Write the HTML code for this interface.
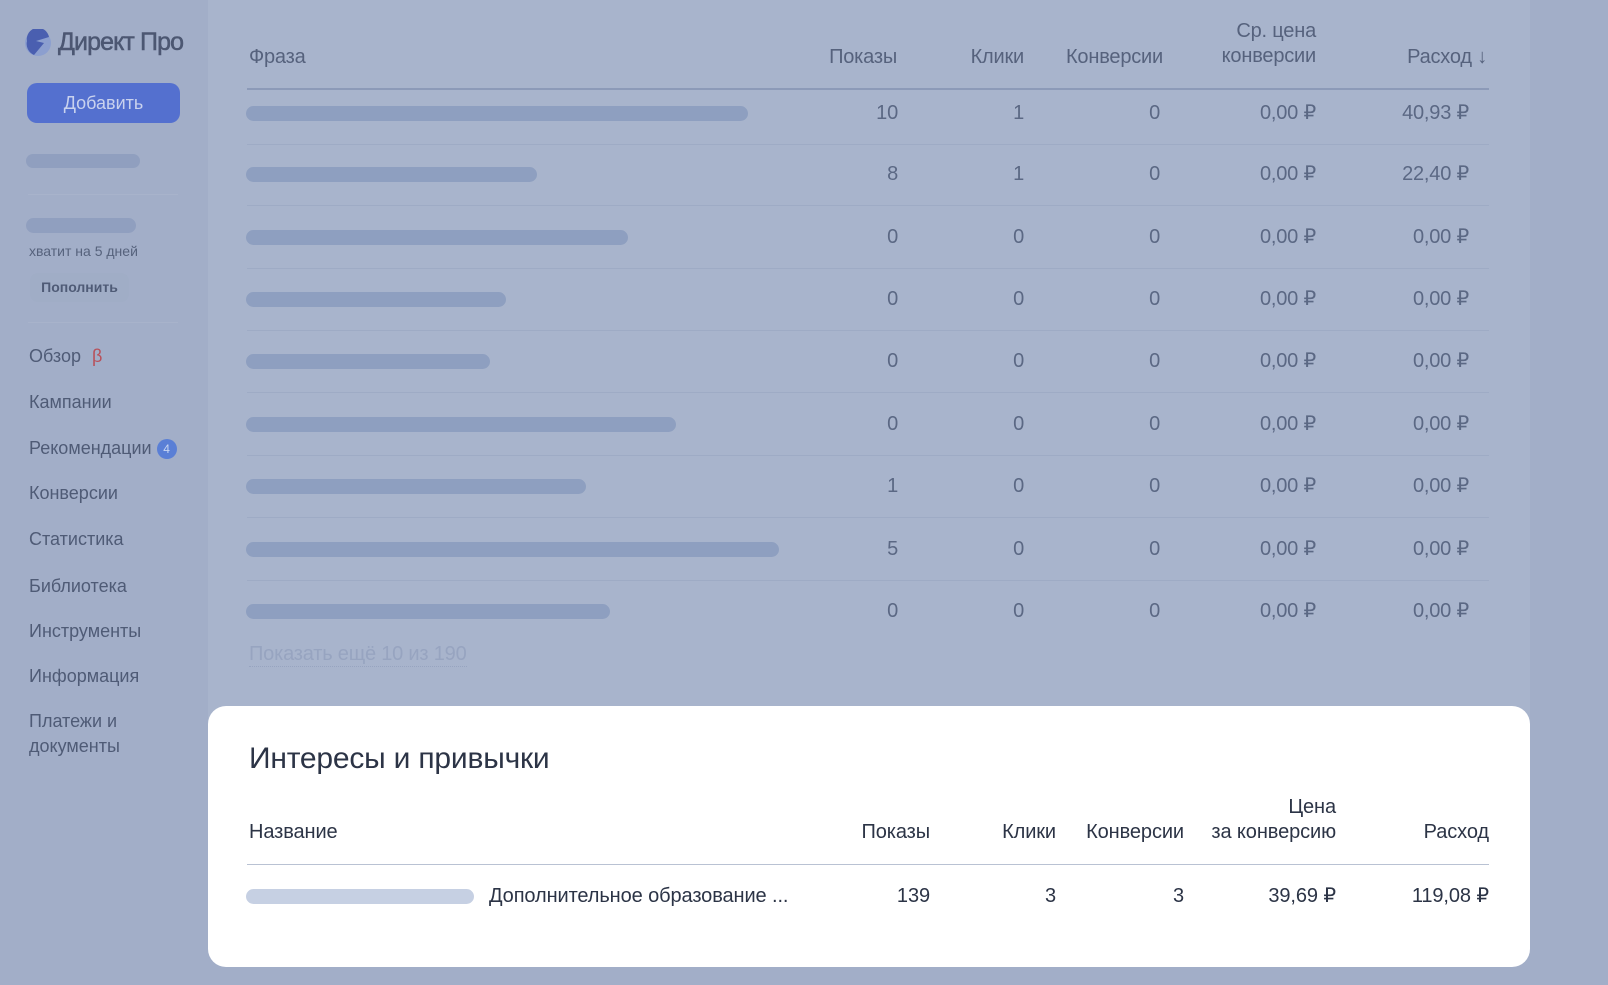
<!DOCTYPE html>
<html><head><meta charset="utf-8"><style>
*{margin:0;padding:0;box-sizing:border-box}
body{width:1608px;height:985px;background:#a2aec8;font-family:"Liberation Sans","Noto Sans CJK SC",sans-serif;position:relative;overflow:hidden}
.a{position:absolute;white-space:nowrap;line-height:24px}
.panel{position:absolute;left:208px;top:0;width:1322px;height:720px;background:#a8b4cc}
.h{color:#56627d;font-size:20px;letter-spacing:-0.2px}
.n{color:#5b6884;font-size:20px;letter-spacing:-0.2px;text-align:right}
.bar{position:absolute;left:246px;height:15px;border-radius:8px;background:#8e9fc0}
.sep{position:absolute;left:247px;width:1242px;height:1px;background:#9eabc5}
.nav{position:absolute;left:29px;color:#4f5b76;font-size:18px}
.card{position:absolute;left:208px;top:706px;width:1322px;height:261px;background:#fff;border-radius:18px}
.c{color:#2c3446;font-size:20px;letter-spacing:-0.1px}
</style></head><body>
<div class="panel"></div>
<svg class="a" style="left:24px;top:29px" width="28" height="28" viewBox="0 0 28 28"><circle cx="14" cy="14" r="13" fill="#8c9fcf"/><path d="M3 12 A11 11 0 0 1 25 8 L12 12 L20 14 L10 26 A12 12 0 0 1 3 12Z" fill="#4a5fb0"/></svg>
<div class="a" style="left:58px;top:30px;font-size:25px;color:#4c5772;letter-spacing:-0.9px;-webkit-text-stroke:0.5px #4c5772">Директ Про</div>
<div class="a" style="left:27px;top:83px;width:153px;height:40px;border-radius:10px;background:#5470cf;color:#c9d2ee;font-size:18px;text-align:center;line-height:40px">Добавить</div>
<div class="a" style="left:26px;top:154px;width:114px;height:14px;border-radius:7px;background:#909fbf"></div>
<div class="a" style="left:28px;top:194px;width:150px;height:1px;background:#a8b3cb"></div>
<div class="a" style="left:26px;top:218px;width:110px;height:15px;border-radius:8px;background:#909fbf"></div>
<div class="a" style="left:29px;top:239px;font-size:14px;color:#56627c">хватит на 5 дней</div>
<div class="a" style="left:30px;top:273px;width:99px;height:29px;border-radius:8px;background:#a0adc6;color:#4f5b76;font-size:14px;font-weight:bold;text-align:center;line-height:29px">Пополнить</div>
<div class="a" style="left:28px;top:322px;width:150px;height:1px;background:#a8b3cb"></div>
<div class="nav a" style="top:344px">Обзор <span style="color:#b8505a;margin-left:6px">β</span></div>
<div class="nav a" style="top:390px">Кампании</div>
<div class="nav a" style="top:436px">Рекомендации <span style="display:inline-block;width:20px;height:20px;border-radius:50%;background:#5a7fd6;color:#c9d6f2;font-size:12px;text-align:center;line-height:20px;vertical-align:1px">4</span></div>
<div class="nav a" style="top:481px">Конверсии</div>
<div class="nav a" style="top:527px">Статистика</div>
<div class="nav a" style="top:574px">Библиотека</div>
<div class="nav a" style="top:619px">Инструменты</div>
<div class="nav a" style="top:664px">Информация</div>
<div class="nav a" style="top:709px;line-height:25px">Платежи и<br>документы</div>
<div class="a h" style="left:249px;top:45px">Фраза</div>
<div class="a h" style="right:711px;top:45px">Показы</div>
<div class="a h" style="right:584px;top:45px">Клики</div>
<div class="a h" style="right:445px;top:45px">Конверсии</div>
<div class="a h" style="right:292px;top:19px;text-align:right;line-height:25px">Ср. цена<br>конверсии</div>
<div class="a h" style="right:121px;top:45px">Расход ↓</div>
<div class="a" style="left:247px;top:88px;width:1242px;height:2px;background:#8c9ab8"></div>
<div id="rows"></div>
<div class="a" style="left:249px;top:643px;font-size:20px;color:#97a4c0;letter-spacing:-0.2px;border-bottom:1px dotted #97a4c0;line-height:23px">Показать ещё 10 из 190</div>
<div class="card"></div>
<div class="a" style="left:249px;top:742px;font-size:30px;line-height:34px;color:#2c3446;letter-spacing:-0.2px">Интересы и привычки</div>
<div class="a c" style="left:249px;top:820px">Название</div>
<div class="a c" style="right:678px;top:820px">Показы</div>
<div class="a c" style="right:552px;top:820px">Клики</div>
<div class="a c" style="right:424px;top:820px">Конверсии</div>
<div class="a c" style="right:272px;top:795px;text-align:right;line-height:25px">Цена<br>за конверсию</div>
<div class="a c" style="right:119px;top:820px">Расход</div>
<div class="a" style="left:247px;top:864px;width:1242px;height:1px;background:#b9c2d3"></div>
<div class="a" style="left:246px;top:889px;width:228px;height:15px;border-radius:8px;background:#c6d0e3"></div>
<div class="a c" style="left:489px;top:884px">Дополнительное образование ...</div>
<div class="a c" style="right:678px;top:884px">139</div>
<div class="a c" style="right:552px;top:884px">3</div>
<div class="a c" style="right:424px;top:884px">3</div>
<div class="a c" style="right:272px;top:884px">39,69 ₽</div>
<div class="a c" style="right:119px;top:884px">119,08 ₽</div>
<script>
var d=[[748,10,1,"40,93"],[537,8,1,"22,40"],[628,0,0,"0,00"],[506,0,0,"0,00"],[490,0,0,"0,00"],[676,0,0,"0,00"],[586,1,0,"0,00"],[779,5,0,"0,00"],[610,0,0,"0,00"]];
var ys=[113,174,237,299,361,424,486,549,611],h="";
d.forEach(function(r,i){var y=ys[i];
h+='<div class="bar" style="top:'+(y-7)+'px;width:'+(r[0]-246)+'px"></div>';
h+='<div class="a n" style="right:710px;top:'+(y-12)+'px">'+r[1]+'</div>';
h+='<div class="a n" style="right:584px;top:'+(y-12)+'px">'+r[2]+'</div>';
h+='<div class="a n" style="right:448px;top:'+(y-12)+'px">0</div>';
h+='<div class="a n" style="right:292px;top:'+(y-12)+'px">0,00 ₽</div>';
h+='<div class="a n" style="right:139px;top:'+(y-12)+'px">'+r[3]+' ₽</div>';
if(i<8)h+='<div class="sep" style="top:'+(y+31)+'px"></div>';});
document.getElementById("rows").innerHTML=h;
</script>
</body></html>
